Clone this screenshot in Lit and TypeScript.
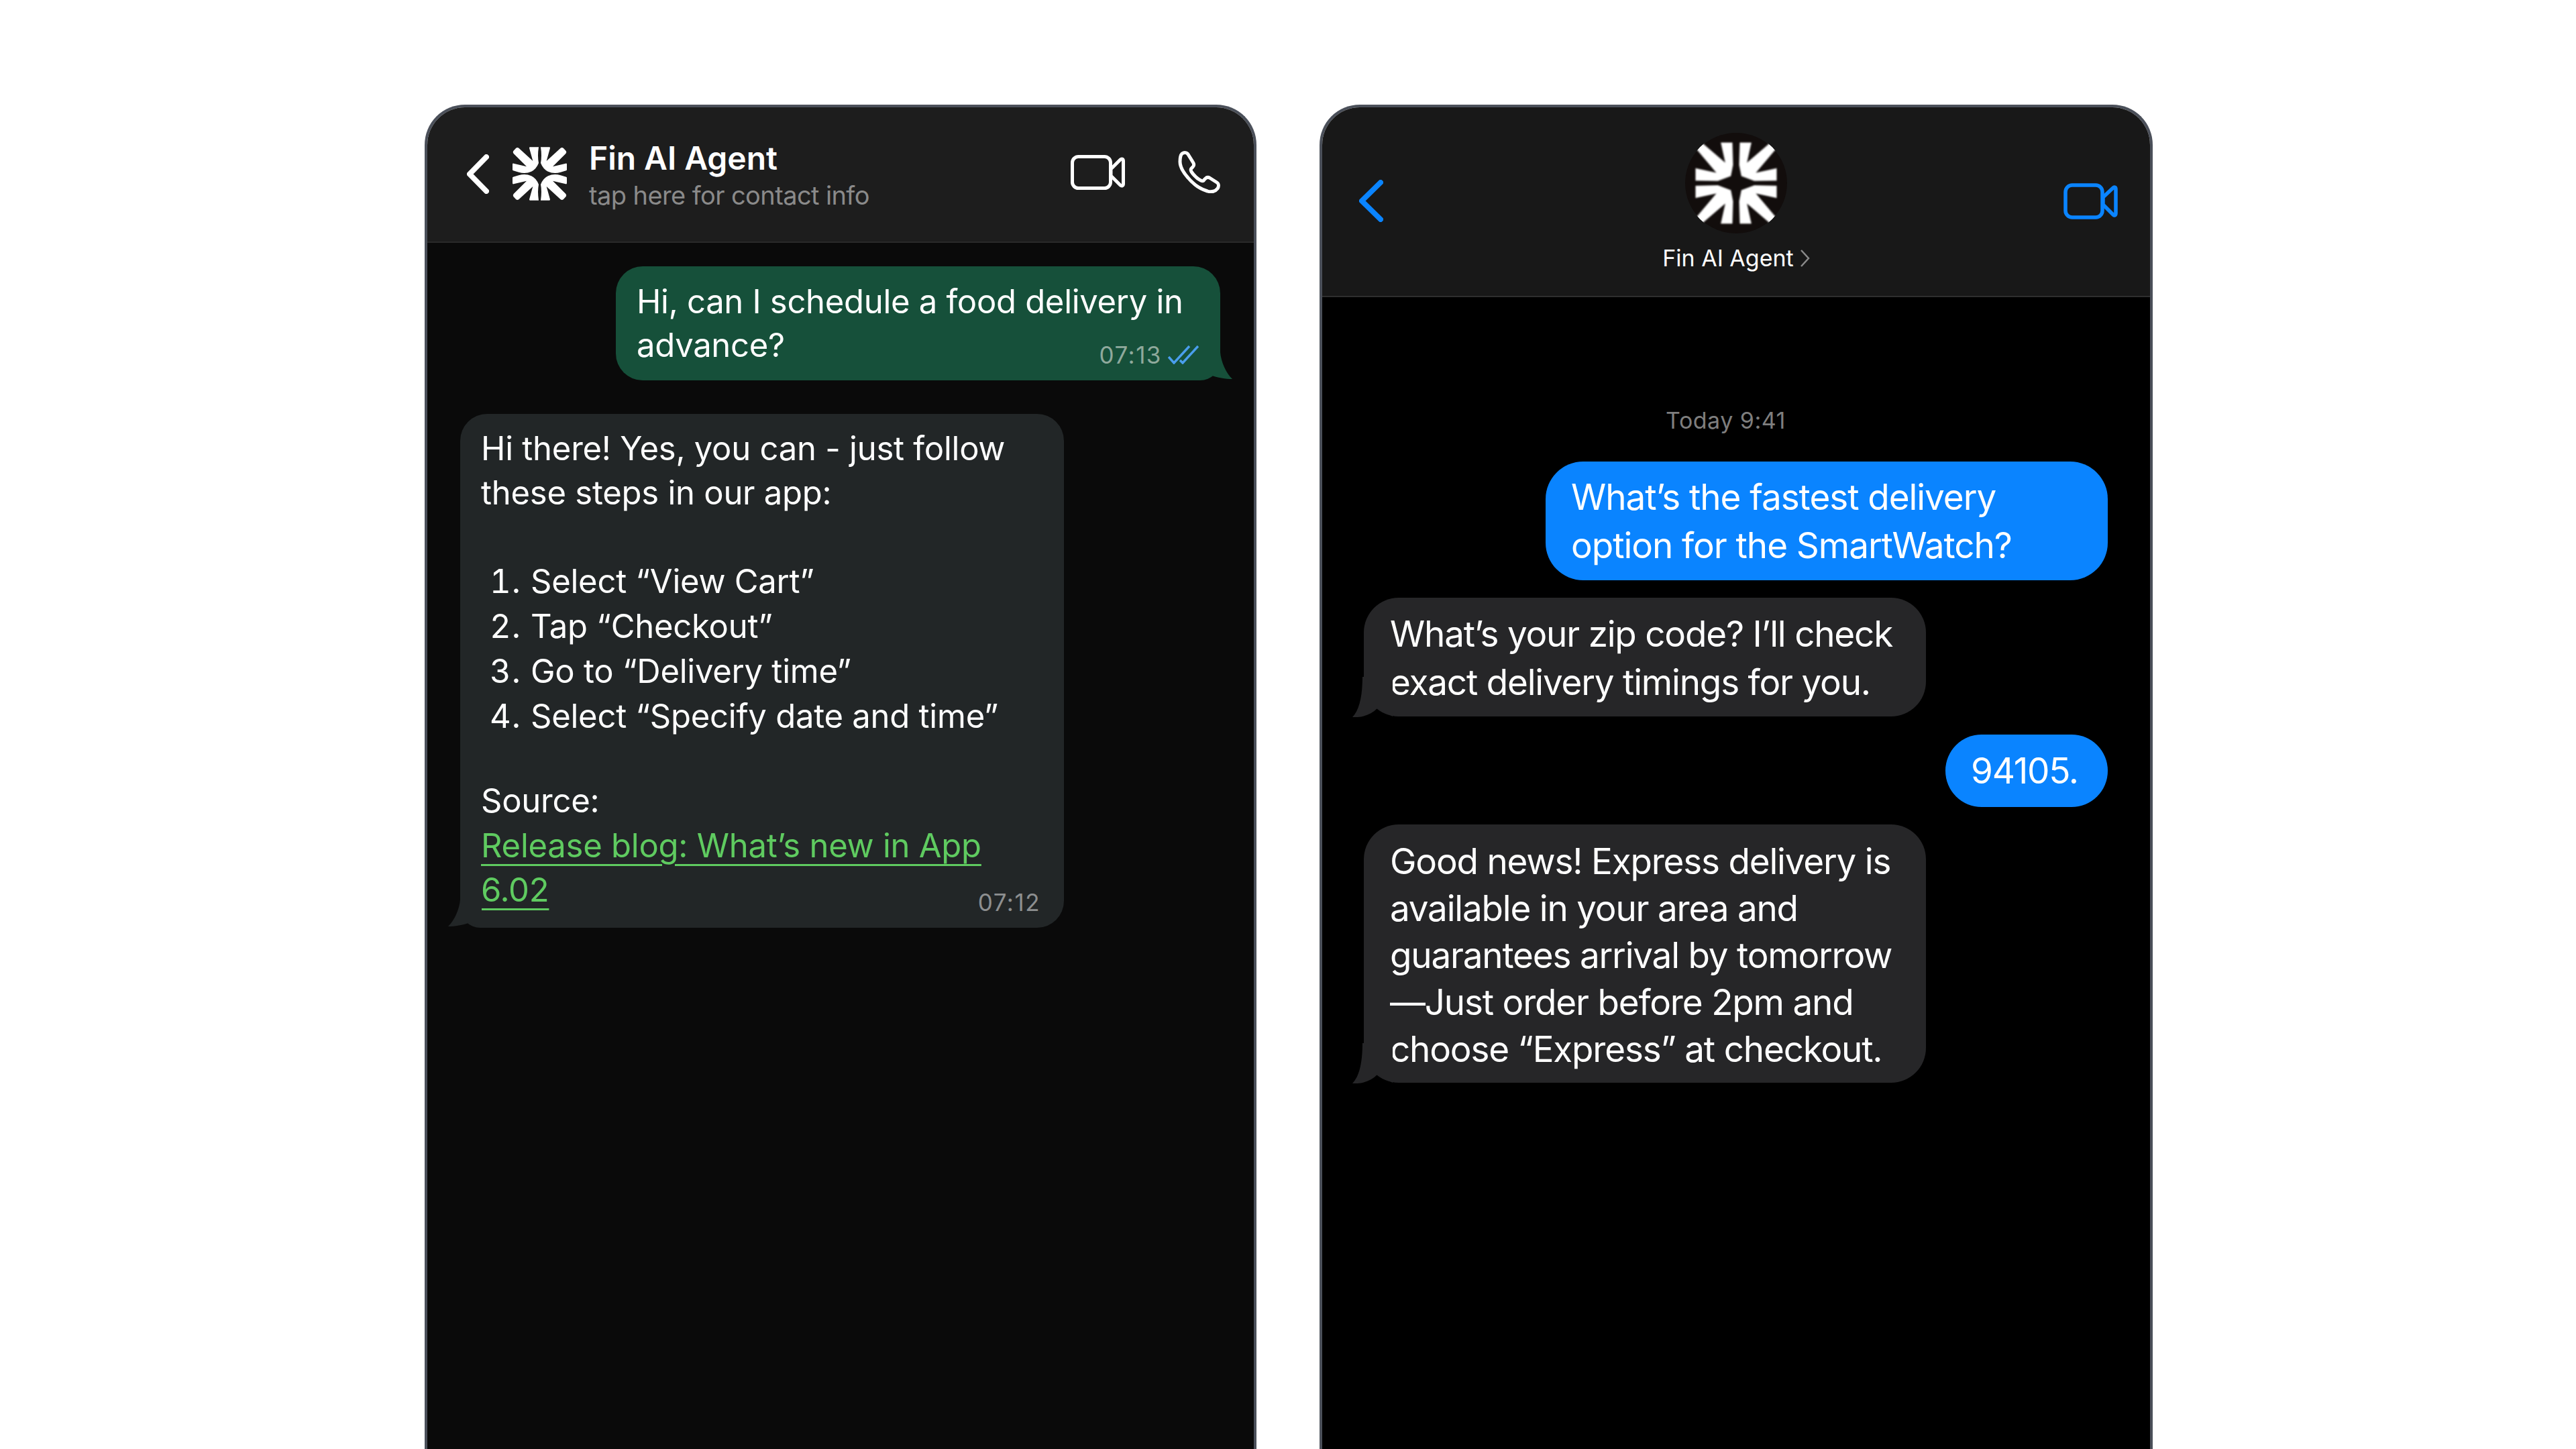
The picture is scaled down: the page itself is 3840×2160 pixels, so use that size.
import { LitElement, html, css, svg } from "lit";
import { customElement } from "lit/decorators.js";

const roundArm = svg`<path d="M78,1 L117,1 Q111,40 117,72 Q106,100 84,110 Q58,122 28,113 L3,106 Q0,105 0,102 L0,78 Q0,73 5,74 L63,88 L5,30 Q0,24 4,18 L15,6 Q21,0 28,5 L91,63 L75,5 Q75,1 78,1 Z"/>`;
const sharpArm = svg`<path d="M113,0 L165,0 L168,100 L158,150 L100,172 L0,170 L0,115 L93,135 L0,25 L28,0 L133,90 Z"/>`;

@customElement("app-root")
export class AppRoot extends LitElement {
  static styles = css`
    :host { display: block; width: 3840px; height: 2160px; overflow: hidden; background: #fff;
      font-family: Inter, "Noto Sans", sans-serif; -webkit-font-smoothing: antialiased; }
    .stage { display: flex; gap: 94px; padding: 156px 0 0 633px; height: 2004px; }
    .phone { width: 1240px; box-sizing: border-box; height: 2004px; border: 4px solid #4b505a; border-bottom: 0;
      border-radius: 60px 60px 0 0; overflow: hidden; display: flex; flex-direction: column; }
    .phone.im { width: 1242px; }
    svg { display: block; flex: none; }

    .wa .head { height: 202px; box-sizing: border-box; background: #1d1d1d; border-bottom: 2px solid #2a2a2a;
      display: flex; align-items: center; padding: 0 50px 2px 59px; color: #fff; }
    .wa .logo { margin-left: 35px; }
    .who { margin-left: 33px; display: flex; flex-direction: column; flex: 1; margin-top: 4px; }
    .who b { font-size: 48px; font-weight: 600; line-height: 58px; letter-spacing: -0.05px; }
    .who span { font-size: 38px; line-height: 47px; margin-top: 3px; color: #8a8a8a; letter-spacing: -0.6px; }
    .head-icons { display: flex; align-items: center; gap: 79px; margin-top: -5px; }

    .wa .chat { flex: 1; background: #0a0a0a; display: flex; flex-direction: column; gap: 50px;
      padding: 35px 50px 0 49px; align-items: flex-start; }
    .wa .msg { position: relative; box-sizing: border-box; color: #fff; font-size: 49px; line-height: 66px;
      border-radius: 40px; white-space: nowrap; letter-spacing: -0.25px; }
    .out { align-self: flex-end; width: 901px; height: 170px; background: #16503a; padding: 20px 31px;
      border-bottom-right-radius: 30px !important; line-height: 65px !important; letter-spacing: -0.3px !important; }
    .in { width: 900px; height: 766px; background: #222627; padding: 19px 31px; border-bottom-left-radius: 30px !important; }
    .in p { margin: 0; }
    .in ol { margin: 66px 0 59px; padding: 0 0 0 74px; }
    .in li { height: 67px; }
    .in li::marker { letter-spacing: 1px; }
    .in .link { display: block; margin-top: 1px; }
    .in a { color: #5fcb60; text-decoration: underline; text-decoration-thickness: 3px; text-underline-offset: 10px; }
    .time { position: absolute; right: 35px; bottom: 18px; font-size: 35px; line-height: 40px; color: #8d8f90; letter-spacing: 1.5px; }
    .out .time { right: 87px; color: #8fa99c; }
    .ticks { position: absolute; right: 32px; bottom: 24px; }
    .wa-tail { position: absolute; bottom: 0; }
    .out .wa-tail { right: -18px; }
    .in .wa-tail { left: -18px; transform: scaleX(-1); }

    .im .head { height: 283px; box-sizing: border-box; background: #181818; border-bottom: 2px solid #2e2e2e;
      position: relative; display: flex; flex-direction: column; align-items: center; padding-top: 38px; color: #fff; }
    .back { position: absolute; left: 55px; top: 108px; }
    .vid { position: absolute; right: 48px; top: 113px; }
    .avatar { width: 152px; height: 150px; }
    .name { display: flex; align-items: center; gap: 9px; font-size: 34px; line-height: 42px; margin-top: 16px; letter-spacing: 0; }
    .im .chat { flex: 1; background: #000; display: flex; flex-direction: column; gap: 26.5px; padding: 0 63px 0 62px; align-items: flex-start; }
    .today { align-self: stretch; text-align: center; color: #7e7e7e; font-size: 34px; line-height: 42px;
      padding: 163px 30px 0 0; margin-bottom: 13px; letter-spacing: 0.5px; }
    .bub { position: relative; box-sizing: border-box; color: #fff; font-size: 53px; line-height: 72px; white-space: nowrap;
      letter-spacing: -1.2px; }
    .blue { background: #0a84ff; align-self: flex-end; border-radius: 56px; padding: 17px 38px; }
    .w1 { width: 838px; height: 177px; letter-spacing: -1.05px; }
    .w2 { width: 242px; height: 108px; padding: 18px 38px; }
    .grey { background: #262628; border-radius: 52px; padding: 18px 39px; width: 838px; }
    .g1 { height: 177px; }
    .g2 { height: 385px; padding-top: 20px; line-height: 70px; }
    .im-tail { position: absolute; left: -17px; bottom: -1px; }
  `;

  render() {
    const waTail = (fill: string) => svg`<svg class="wa-tail" width="50" height="50" viewBox="0 0 50 50"><path fill="${fill}" d="M32,0 L32,8 C33,22 41,40 50,48 C40,48 28,46 17,42 L0,50 L0,0 Z"/></svg>`;
    const imTail = svg`<svg class="im-tail" width="60" height="60" viewBox="0 0 60 60"><path fill="#262628" d="M15,0 C15,30 10,50 0,60 C15,61 28,56 37,47 L60,59 L60,0 Z"/></svg>`;
    return html`
      <div class="stage">
        <section class="phone wa">
          <header class="head">
            <svg width="33" height="59" viewBox="0 0 33 59"><path d="M29,4 L4,29.5 L29,55" fill="none" stroke="#fff" stroke-width="8" stroke-linecap="round" stroke-linejoin="round"/></svg>
            <svg class="logo" width="81" height="80" viewBox="0 0 243 240" fill="#fff">
              ${roundArm}
              <g transform="translate(243,0) scale(-1,1)">${roundArm}</g>
              <g transform="translate(0,240) scale(1,-1)">${roundArm}</g>
              <g transform="translate(243,240) scale(-1,-1)">${roundArm}</g>
            </svg>
            <div class="who"><b>Fin AI Agent</b><span>tap here for contact info</span></div>
            <div class="head-icons">
              <svg width="81" height="52" viewBox="0 0 81 52" fill="none" stroke="#fff" stroke-width="5" stroke-linejoin="round">
                <rect x="2.5" y="2.5" width="57" height="47" rx="9"/>
                <path d="M60,21 L74,7 C76,5 78.500,6 78.500,9 L78.500,43 C78.500,46 76,47 74,45 L60,31 Z"/>
              </svg>
              <svg width="63" height="63" viewBox="0 0 63 63" fill="none" stroke="#fff" stroke-width="5" stroke-linejoin="round">
                <path d="M6,4 C9,2 13,2 15,5 L23,18 C24,20 24,22 22,24 L20,26 C19,27 19,29 20,31 C24,37 28,41 34,44 C36,45 38,45 39,43 L41,41 C43,39 45,39 47,40 L58,47 C61,49 61,53 59,56 C56,60 50,62 44,60 C34,57 24,51 15,40 C7,31 3,22 3,16 C3,11 4,6 6,4 Z"/>
              </svg>
            </div>
          </header>
          <div class="chat">
            <div class="msg out">Hi, can I schedule a food delivery in<br />advance?
              <span class="time">07:13</span>
              <svg class="ticks" width="46" height="28" viewBox="0 0 46 28" fill="none" stroke="#4a9eed" stroke-width="3.500"><path d="M1,17 L9,26 L32,1"/><path d="M18,22 L22,26 L45,1"/></svg>
              ${waTail("#16503a")}
            </div>
            <div class="msg in">
              <p>Hi there! Yes, you can - just follow<br />these steps in our app:</p>
              <ol>
                <li>Select “View Cart”</li>
                <li>Tap “Checkout”</li>
                <li>Go to “Delivery time”</li>
                <li>Select “Specify date and time”</li>
              </ol>
              <p>Source:<span class="link"><a>Release blog: What’s new in App<br />6.02</a></span></p>
              <span class="time">07:12</span>
              ${waTail("#222627")}
            </div>
          </div>
        </section>

        <section class="phone im">
          <header class="head">
            <svg class="back" width="36" height="63" viewBox="0 0 36 63"><path d="M32,4 L4,31.500 L32,59" fill="none" stroke="#0a84ff" stroke-width="8" stroke-linecap="round" stroke-linejoin="round"/></svg>
            <svg class="avatar" viewBox="0 0 152 150">
              <defs><clipPath id="c"><circle cx="76" cy="75" r="76"/></clipPath></defs>
              <ellipse cx="76" cy="75" rx="76" ry="75" fill="#120d0c"/>
              <g clip-path="url(#c)" fill="#fff" style="filter: blur(1px)">
                <g transform="translate(15.500,14.500) scale(0.3333)">
                  ${sharpArm}
                  <g transform="translate(363,0) scale(-1,1)">${sharpArm}</g>
                  <g transform="translate(0,363) scale(1,-1)">${sharpArm}</g>
                  <g transform="translate(363,363) scale(-1,-1)">${sharpArm}</g>
                </g>
              </g>
            </svg>
            <div class="name">Fin AI Agent
              <svg width="15" height="28" viewBox="0 0 15 28"><path d="M2,2 L13,14 L2,26" fill="none" stroke="#8a8a8a" stroke-width="2.500"/></svg>
            </div>
            <svg class="vid" width="81" height="54" viewBox="0 0 81 54" fill="none" stroke="#0a84ff" stroke-width="5.500" stroke-linejoin="round">
              <rect x="3" y="3" width="55" height="48" rx="10"/>
              <path d="M59,21 L74,7 C76,5 78,6 78,9 L78,45 C78,48 76,49 74,47 L59,32 Z"/>
            </svg>
          </header>
          <div class="chat">
            <div class="today">Today 9:41</div>
            <div class="bub blue w1">What’s the fastest delivery<br />option for the SmartWatch?</div>
            <div class="bub grey g1">What’s your zip code? I’ll check<br />exact delivery timings for you.${imTail}</div>
            <div class="bub blue w2">94105.</div>
            <div class="bub grey g2">Good news! Express delivery is<br />available in your area and<br />guarantees arrival by tomorrow<br />—Just order before 2pm and<br />choose “Express” at checkout.${imTail}</div>
          </div>
        </section>
      </div>
    `;
  }
}
